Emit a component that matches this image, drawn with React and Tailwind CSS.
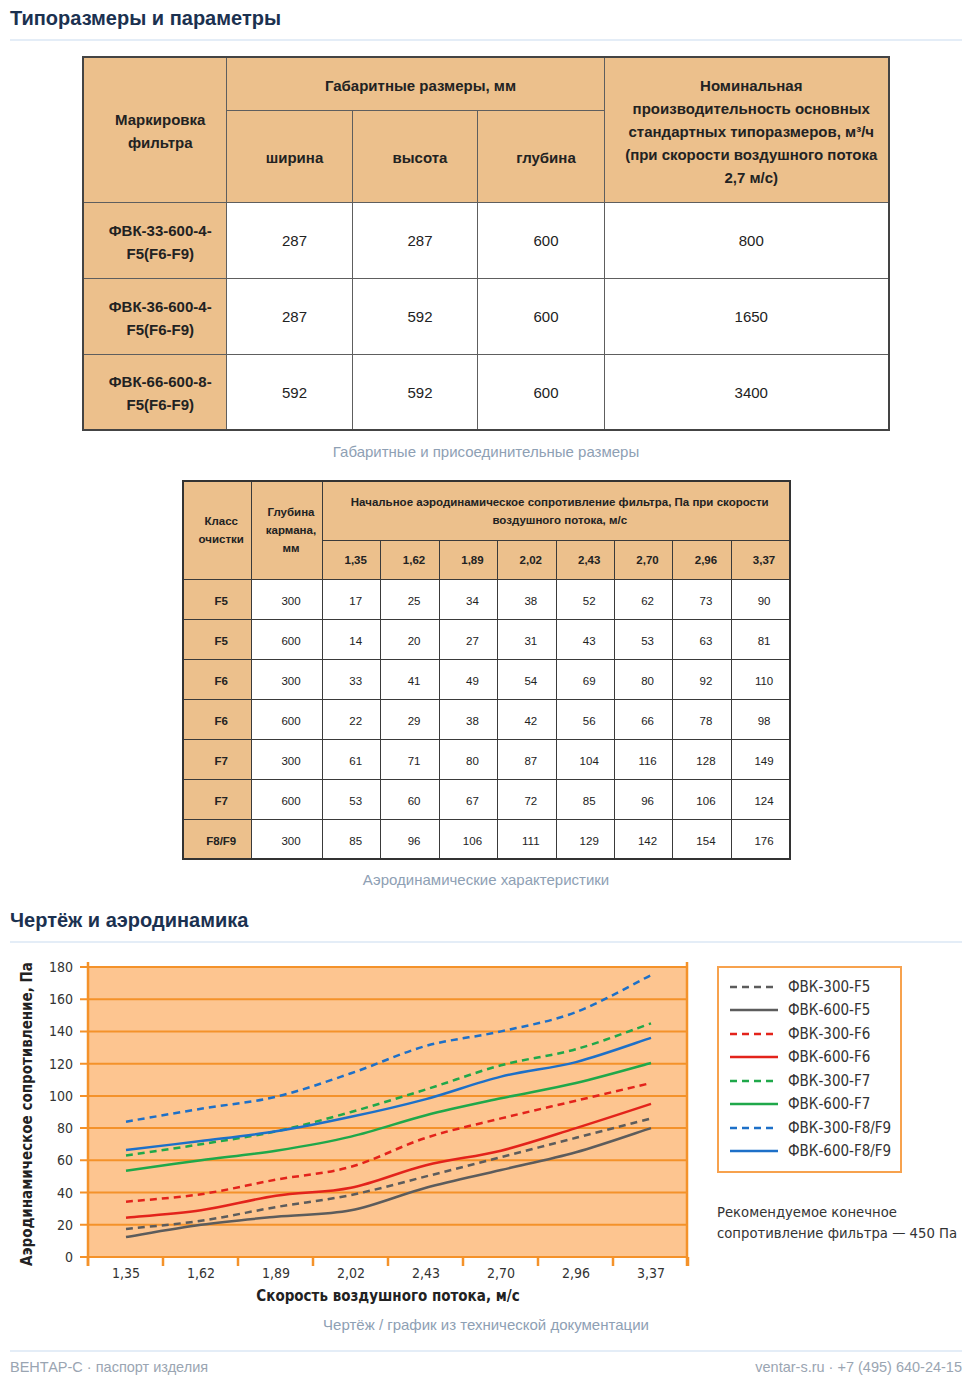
import React from "react";

const XS = ["1,35", "1,62", "1,89", "2,02", "2,43", "2,70", "2,96", "3,37"];
const SERIES = [
  { label: "ФВК-300-F5", color: "#5c5c5c", dash: true, v: [17.4, 22.5, 31, 38.5, 50, 62, 74, 86] },
  { label: "ФВК-600-F5", color: "#5c5c5c", dash: false, v: [12.4, 20, 25, 29, 43, 54, 65, 80] },
  { label: "ФВК-300-F6", color: "#e3231b", dash: true, v: [34.3, 39, 48, 56, 74, 86, 97, 108] },
  { label: "ФВК-600-F6", color: "#e3231b", dash: false, v: [24.4, 29, 38, 43, 57, 66, 80, 95] },
  { label: "ФВК-300-F7", color: "#1fa84a", dash: true, v: [63, 70, 78, 90, 104, 119, 129, 145] },
  { label: "ФВК-600-F7", color: "#1fa84a", dash: false, v: [53.6, 60, 66, 74.7, 88, 98.5, 108, 120.4] },
  { label: "ФВК-300-F8/F9", color: "#1d70c8", dash: true, v: [84, 92, 99.5, 114, 131, 140, 152, 175] },
  { label: "ФВК-600-F8/F9", color: "#1d70c8", dash: false, v: [66.4, 72, 78, 87, 98, 112, 121, 136] },
];

const Y0 = 307;
const K = 290 / 180;
const yOf = (v) => Y0 - v * K;
const xOf = (i) => 116 + 75 * i;

function smooth(pts) {
  let d = `M${pts[0][0]},${pts[0][1]}`;
  for (let i = 0; i < pts.length - 1; i++) {
    const p0 = pts[i - 1] || pts[i];
    const p1 = pts[i];
    const p2 = pts[i + 1];
    const p3 = pts[i + 2] || p2;
    const c1x = p1[0] + (p2[0] - p0[0]) / 6;
    const c1y = p1[1] + (p2[1] - p0[1]) / 6;
    const c2x = p2[0] - (p3[0] - p1[0]) / 6;
    const c2y = p2[1] - (p3[1] - p1[1]) / 6;
    d += ` C${c1x.toFixed(1)},${c1y.toFixed(1)} ${c2x.toFixed(1)},${c2y.toFixed(1)} ${p2[0]},${p2[1].toFixed(1)}`;
  }
  return d;
}

const CH_FONT = { fontFamily: '"DejaVu Sans Condensed", "DejaVu Sans", sans-serif', fontStretch: "condensed" };

function Chart() {
  const grid = [0, 20, 40, 60, 80, 100, 120, 140, 160, 180];
  return (
    <svg width="697" height="355" viewBox="0 0 697 355" style={CH_FONT}>
      <rect x="78" y="17" width="599" height="290" fill="#fdc590" />
      {grid.map((g) => (
        <line key={g} x1="70" x2="677" y1={yOf(g)} y2={yOf(g)} stroke="#f4922a" strokeWidth="2" />
      ))}
      <line x1="78" x2="78" y1="12" y2="316" stroke="#f4922a" strokeWidth="2.5" />
      <line x1="677" x2="677" y1="12" y2="316" stroke="#f4922a" strokeWidth="2.5" />
      {Array.from({ length: 9 }).map((_, i) => (
        <line key={i} x1={78 + 75 * i} x2={78 + 75 * i} y1="307" y2="316" stroke="#f4922a" strokeWidth="2.5" />
      ))}
      {grid.map((g) => (
        <text key={g} x="63" y={yOf(g) + 5} textAnchor="end" fontSize="14" fill="#333">
          {g}
        </text>
      ))}
      {XS.map((s, i) => (
        <text key={s} x={xOf(i)} y="328" textAnchor="middle" fontSize="14" fill="#333">
          {s}
        </text>
      ))}
      {SERIES.map((s) => (
        <path
          key={s.label}
          d={smooth(s.v.map((v, i) => [xOf(i), yOf(v)]))}
          fill="none"
          stroke={s.color}
          strokeWidth="2.5"
          strokeDasharray={s.dash ? "7 5" : undefined}
          strokeLinecap="butt"
        />
      ))}
      <text x="378" y="351" textAnchor="middle" fontSize="15" fontWeight="bold" fill="#222">
        Скорость воздушного потока, м/с
      </text>
      <text
        x="0"
        y="0"
        transform="translate(17 164) rotate(-90)"
        textAnchor="middle"
        dominantBaseline="central"
        fontSize="15"
        fontWeight="bold"
        fill="#222"
      >
        Аэродинамическое сопротивление, Па
      </text>
    </svg>
  );
}

function Legend() {
  return (
    <div className="ml-[10px] pt-[16px]" style={CH_FONT}>
      <div className="w-[185px] border-2 border-[#f7a24e] pt-[7px] pb-[8px] pl-[11px]">
        {SERIES.map((s) => (
          <div key={s.label} className="flex h-[23.5px] items-center">
            <svg width="48" height="4" className="shrink-0">
              <line x1="0" x2="48" y1="2" y2="2" stroke={s.color} strokeWidth="2.5" strokeDasharray={s.dash ? "7 5" : undefined} />
            </svg>
            <span className="ml-[10px] text-[15px] text-[#333]">{s.label}</span>
          </div>
        ))}
      </div>
      <div className="mt-[28px] text-[14.7px] leading-[21px] text-[#333] whitespace-nowrap">
        Рекомендуемое конечное
        <br />
        сопротивление фильтра — 450 Па
      </div>
    </div>
  );
}

const T1 = [
  ["ФВК-33-600-4-", "F5(F6-F9)", "287", "287", "600", "800"],
  ["ФВК-36-600-4-", "F5(F6-F9)", "287", "592", "600", "1650"],
  ["ФВК-66-600-8-", "F5(F6-F9)", "592", "592", "600", "3400"],
];

const T2 = [
  ["F5", "300", "17", "25", "34", "38", "52", "62", "73", "90"],
  ["F5", "600", "14", "20", "27", "31", "43", "53", "63", "81"],
  ["F6", "300", "33", "41", "49", "54", "69", "80", "92", "110"],
  ["F6", "600", "22", "29", "38", "42", "56", "66", "78", "98"],
  ["F7", "300", "61", "71", "80", "87", "104", "116", "128", "149"],
  ["F7", "600", "53", "60", "67", "72", "85", "96", "106", "124"],
  ["F8/F9", "300", "85", "96", "106", "111", "129", "142", "154", "176"],
];

function Heading({ children }) {
  return (
    <h2 className="border-b-2 border-[#e4edf7] pt-[6px] pb-[9px] text-[20px] leading-[24px] font-bold text-[#1b3150]">
      {children}
    </h2>
  );
}

export default function App() {
  const th1 = "border border-[#5e5e5e] bg-[#ecc08c] pl-[14px] pr-[4px] pt-[3px] text-center align-middle font-bold leading-[23px]";
  const td1 = "border border-[#5e5e5e] bg-white pl-[14px] pr-[4px] pt-[3px] text-center align-middle";
  const th2 = "border border-[#3a3a3a] bg-[#ecc08c] pl-[9px] pr-[1px] text-center align-middle font-bold leading-[18px]";
  const tb2 = "border border-[#3a3a3a] bg-[#ecc08c] pl-[9px] pr-[1px] pt-[4px] text-center align-middle font-bold leading-[18px]";
  const td2 = "border border-[#3a3a3a] bg-white pl-[9px] pr-[1px] pt-[4px] text-center align-middle leading-[18px]";
  return (
    <div className="w-[972px] bg-white px-[10px]" style={{ fontFamily: '"Liberation Sans", Arial, sans-serif' }}>
      <Heading>Типоразмеры и параметры</Heading>

      <table className="mx-auto mt-[15px] w-[805px] table-fixed border-collapse border-2 border-[#444] text-[15px] text-[#222]">
        <colgroup>
          <col className="w-[143px]" />
          <col className="w-[126px]" />
          <col className="w-[125px]" />
          <col className="w-[127px]" />
          <col className="w-[284px]" />
        </colgroup>
        <thead>
          <tr className="h-[53px]">
            <th rowSpan={2} className={th1}>
              Маркировка
              <br />
              фильтра
            </th>
            <th colSpan={3} className={th1}>
              Габаритные размеры, мм
            </th>
            <th rowSpan={2} className={th1}>
              Номинальная
              <br />
              производительность основных
              <br />
              стандартных типоразмеров, м³/ч
              <br />
              (при скорости воздушного потока
              <br />
              2,7 м/с)
            </th>
          </tr>
          <tr className="h-[92px]">
            <th className={th1}>ширина</th>
            <th className={th1}>высота</th>
            <th className={th1}>глубина</th>
          </tr>
        </thead>
        <tbody>
          {T1.map((r) => (
            <tr key={r[0]} className="h-[76px]">
              <td className={th1}>
                {r[0]}
                <br />
                {r[1]}
              </td>
              <td className={td1}>{r[2]}</td>
              <td className={td1}>{r[3]}</td>
              <td className={td1}>{r[4]}</td>
              <td className={td1}>{r[5]}</td>
            </tr>
          ))}
        </tbody>
      </table>

      <p className="mt-[11px] text-center text-[15px] leading-[20px] text-[#8ea0b4]">Габаритные и присоединительные размеры</p>

      <table className="mx-auto mt-[18px] w-[609px] table-fixed border-collapse border-2 border-[#333] text-[11.5px] text-[#222]">
        <colgroup>
          <col className="w-[69px]" />
          <col className="w-[71px]" />
          {XS.map((s) => (
            <col key={s} />
          ))}
        </colgroup>
        <thead>
          <tr className="h-[59px]">
            <th rowSpan={2} className={th2}>
              Класс
              <br />
              очистки
            </th>
            <th rowSpan={2} className={th2}>
              Глубина
              <br />
              кармана,
              <br />
              мм
            </th>
            <th colSpan={8} className={th2}>
              Начальное аэродинамическое сопротивление фильтра, Па при скорости
              <br />
              воздушного потока, м/с
            </th>
          </tr>
          <tr className="h-[39px]">
            {XS.map((s) => (
              <th key={s} className={th2}>
                {s}
              </th>
            ))}
          </tr>
        </thead>
        <tbody>
          {T2.map((r, ri) => (
            <tr key={ri} className="h-[40px]">
              <td className={tb2}>{r[0]}</td>
              {r.slice(1).map((c, ci) => (
                <td key={ci} className={td2}>
                  {c}
                </td>
              ))}
            </tr>
          ))}
        </tbody>
      </table>

      <p className="mt-[10px] text-center text-[15px] leading-[20px] text-[#8ea0b4]">Аэродинамические характеристики</p>

      <div className="mt-[12px]">
        <Heading>Чертёж и аэродинамика</Heading>
      </div>

      <div className="mt-[7px] flex">
        <Chart />
        <Legend />
      </div>

      <p className="mt-[10px] text-center text-[15px] leading-[20px] text-[#8ea0b4]">Чертёж / график из технической документации</p>

      <footer className="mt-[15px] flex justify-between border-t-2 border-[#e4edf7] pt-[5px] pb-[8px] text-[14.5px] leading-[20px] text-[#9aa5b2]">
        <span>ВЕНТАР-С · паспорт изделия</span>
        <span>ventar-s.ru · +7 (495) 640-24-15</span>
      </footer>
    </div>
  );
}
